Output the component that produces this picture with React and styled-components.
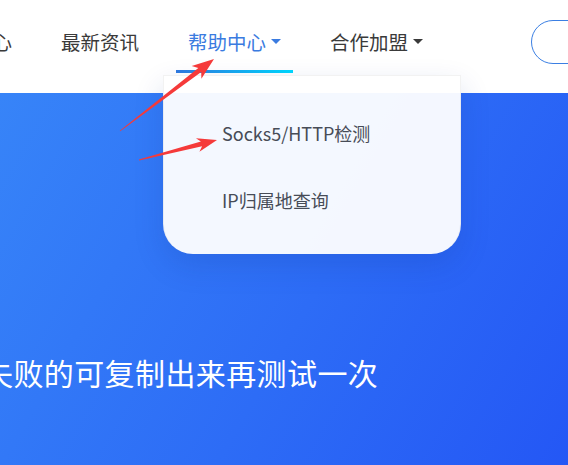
import React from 'react';
import styled, { createGlobalStyle } from 'styled-components';

const Global = createGlobalStyle`
  html, body {
    margin: 0;
    padding: 0;
    background: #fff;
  }
  body {
    font-family: "Noto Sans CJK SC", "Noto Sans", sans-serif;
  }
`;

const Page = styled.div`
  position: relative;
  width: 568px;
  height: 465px;
  overflow: hidden;
`;

const Header = styled.header`
  position: relative;
  z-index: 2;
  height: 93px;
  background: #fff;
  display: flex;
  align-items: flex-start;
`;

const Nav = styled.nav`
  display: flex;
  align-items: flex-start;
  gap: 25px;
  margin-left: -78px;
  flex-shrink: 0;
`;

const NavItem = styled.div`
  position: relative;
  height: 73px;
  box-sizing: border-box;
  padding: 31px 12px 0;
  display: flex;
  align-items: flex-start;
  font-size: 19.5px;
  line-height: 22px;
  white-space: nowrap;
  color: ${(p) => (p.$active ? '#3a7be0' : '#3a3a3a')};
  background: ${(p) =>
    p.$active
      ? 'linear-gradient(90deg, #2f79e0, #00d9ff) left bottom / 100% 3px no-repeat'
      : 'none'};
`;

const Caret = styled.span`
  width: 0;
  height: 0;
  margin: 8px 0 0 5px;
  border-left: 5px solid transparent;
  border-right: 5px solid transparent;
  border-top: 5px solid currentColor;
`;

const Dropdown = styled.div`
  position: absolute;
  top: 75px;
  left: -13px;
  width: 298px;
  height: 179px;
  box-sizing: border-box;
  padding: 24px 0 0 58px;
  border: 1px solid rgba(0, 0, 0, 0.05);
  border-bottom: none;
  border-radius: 0 0 30px 30px;
  background: rgba(255, 255, 255, 0.95);
  box-shadow: 0 12px 30px rgba(20, 50, 140, 0.16);
  display: flex;
  flex-direction: column;
`;

const DropItem = styled.div`
  font-size: 18px;
  line-height: 67px;
  color: #474c57;
`;

const LoginButton = styled.button`
  flex-shrink: 0;
  margin: 20px 0 0 96px;
  width: 140px;
  height: 44px;
  box-sizing: border-box;
  padding: 0 0 0 48px;
  border: 1px solid #3b7fe3;
  border-radius: 22px;
  background: #fff;
  color: #3b7fe3;
  font: inherit;
  font-size: 16px;
  text-align: left;
`;

const Hero = styled.section`
  height: 372px;
  box-sizing: border-box;
  padding-top: 259px;
  background: linear-gradient(120deg, #3784f8 0%, #2d6cf6 55%, #2457f5 100%);
`;

const HeroText = styled.h1`
  margin: 0 0 0 -17px;
  font-size: 30px;
  font-weight: 400;
  line-height: 40px;
  letter-spacing: 0.4px;
  color: #fff;
  white-space: nowrap;
`;

const Overlay = styled.svg`
  position: absolute;
  inset: 0;
  z-index: 3;
  pointer-events: none;
`;

function arrowPoints([tx, ty], [hx, hy], head = 20, wing = 8) {
  const dx = hx - tx;
  const dy = hy - ty;
  const len = Math.hypot(dx, dy);
  const ux = dx / len;
  const uy = dy / len;
  const nx = -uy;
  const ny = ux;
  const bx = hx - ux * head;
  const by = hy - uy * head;
  const nbx = bx + ux * 4;
  const nby = by + uy * 4;
  const pts = [
    [tx + nx * 0.4, ty + ny * 0.4],
    [nbx + nx * 2.4, nby + ny * 2.4],
    [bx + nx * wing, by + ny * wing],
    [hx, hy],
    [bx - nx * wing, by - ny * wing],
    [nbx - nx * 2.4, nby - ny * 2.4],
    [tx - nx * 0.4, ty - ny * 0.4],
  ];
  return pts.map((p) => p.map((v) => v.toFixed(1)).join(',')).join(' ');
}

const arrows = [
  { tail: [120, 131], tip: [214, 59], head: 22, wing: 8 },
  { tail: [139, 160], tip: [217, 140], head: 20, wing: 7 },
];

export default function App() {
  return (
    <Page>
      <Global />
      <Header>
        <Nav>
          <NavItem>个人中心</NavItem>
          <NavItem>最新资讯</NavItem>
          <NavItem $active>
            帮助中心
            <Caret />
            <Dropdown>
              <DropItem>Socks5/HTTP检测</DropItem>
              <DropItem>IP归属地查询</DropItem>
            </Dropdown>
          </NavItem>
          <NavItem>
            合作加盟
            <Caret />
          </NavItem>
        </Nav>
        <LoginButton>登录</LoginButton>
      </Header>
      <Hero>
        <HeroText>失败的可复制出来再测试一次</HeroText>
      </Hero>
      <Overlay width="568" height="465" viewBox="0 0 568 465">
        {arrows.map((a, i) => (
          <polygon key={i} points={arrowPoints(a.tail, a.tip, a.head, a.wing)} fill="#f53a3a" />
        ))}
      </Overlay>
    </Page>
  );
}
